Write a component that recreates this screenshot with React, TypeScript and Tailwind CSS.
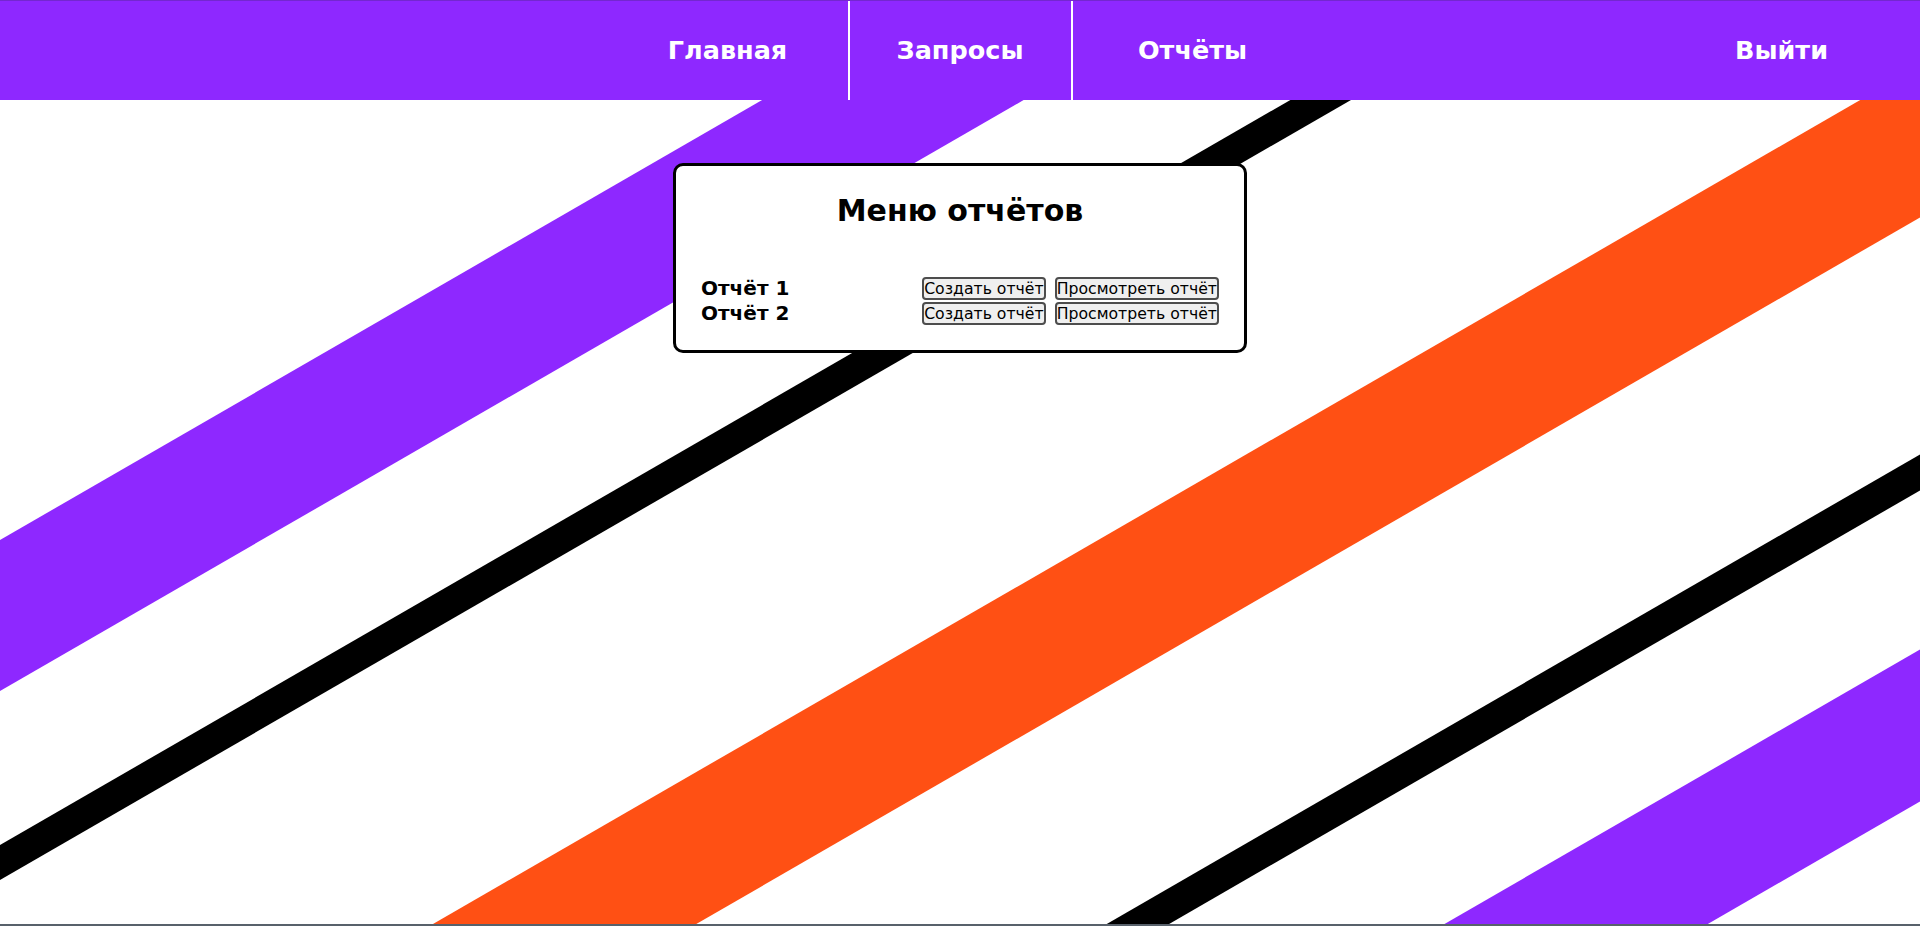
import React from "react";

const stripes = [
  { c1: 540, c2: 691, color: "#8e28ff" },
  { c1: 845, c2: 880, color: "#000000" },
  { c1: 1174, c2: 1326, color: "#ff5014" },
  { c1: 1563, c2: 1599, color: "#000000" },
  { c1: 1758, c2: 1910, color: "#8e28ff" },
];

function Stripes() {
  // lines are y + tan(30deg) * x = c in page coordinates, drawn below the 100px header
  const k = 1920 * Math.tan(Math.PI / 6);
  return (
    <svg
      className="absolute inset-0 h-full w-full"
      viewBox="0 0 1920 824"
      preserveAspectRatio="xMinYMin slice"
      aria-hidden
    >
      {stripes.map((s, i) => (
        <polygon
          key={i}
          fill={s.color}
          points={`0,${s.c1 - 100} 1920,${s.c1 - 100 - k} 1920,${s.c2 - 100 - k} 0,${s.c2 - 100}`}
        />
      ))}
    </svg>
  );
}

const reports = ["Отчёт 1", "Отчёт 2"];

function ReportButton({ children }: { children: React.ReactNode }) {
  return (
    <button className="h-[23px] rounded-[4px] border-2 border-[#4d4d4d] bg-[#efefef] px-0 text-[15.7px] leading-[19px] text-black">
      {children}
    </button>
  );
}

export default function App() {
  return (
    <div className="flex h-[926px] flex-col overflow-hidden bg-white font-['DejaVu_Sans',Verdana,sans-serif]">
      <header className="grid h-[100px] shrink-0 grid-cols-[1fr_auto_1fr] border-t border-[#7427cf] bg-[#8e28ff] text-[25.5px] font-bold text-white">
        <div />
        <nav className="flex h-full">
          <a className="flex w-[242px] items-center justify-center border-r-2 border-white">
            Главная
          </a>
          <a className="flex w-[223px] items-center justify-center border-r-2 border-white">
            Запросы
          </a>
          <a className="flex w-[240px] items-center justify-center">Отчёты</a>
        </nav>
        <div className="flex items-center justify-end pr-[92px]">
          <a>Выйти</a>
        </div>
      </header>

      <main className="relative flex-1 overflow-hidden pt-[63px]">
        <Stripes />
        <section className="relative mx-auto w-[574px] rounded-[10px] border-[3px] border-black bg-white px-[25px] pt-[27px] pb-[25px]">
          <h1 className="text-center text-[30px] leading-[36px] font-bold text-black">
            Меню отчётов
          </h1>
          <div className="mt-[48px] flex flex-col gap-[2px]">
            {reports.map((r) => (
              <div key={r} className="flex h-[23px] items-center justify-between">
                <span className="text-[20px] leading-[23px] font-bold text-black">
                  {r}
                </span>
                <div className="flex gap-[9px]">
                  <ReportButton>Создать отчёт</ReportButton>
                  <ReportButton>Просмотреть отчёт</ReportButton>
                </div>
              </div>
            ))}
          </div>
        </section>
      </main>
      <div className="h-[2px] shrink-0 bg-[#58616b]" />
    </div>
  );
}
